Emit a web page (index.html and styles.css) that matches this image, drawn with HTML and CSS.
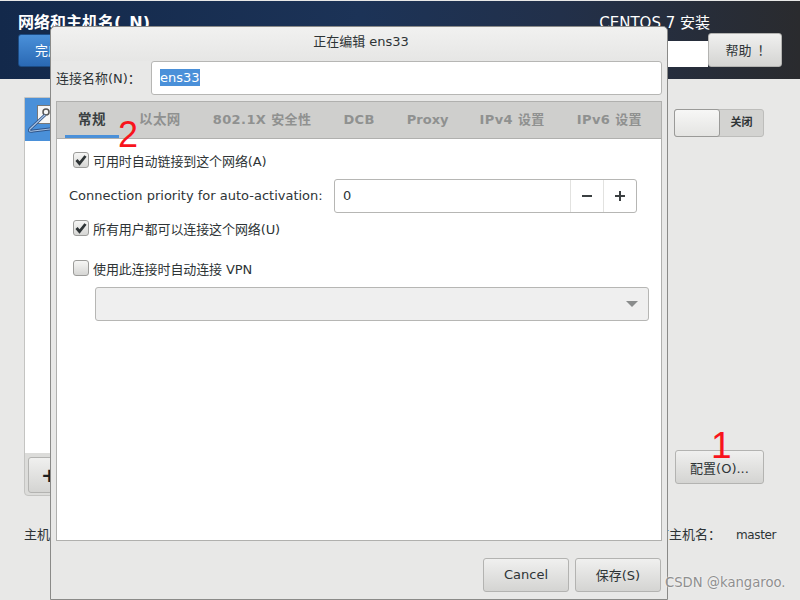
FILE: index.html
```html
<!DOCTYPE html>
<html lang="zh-CN">
<head>
<meta charset="utf-8">
<title>网络和主机名</title>
<link rel="stylesheet" href="styles.css">
</head>
<body>
<div class="screen">
  <header class="top">
    <div class="top-left">
      <div class="top-title">网络和主机名(_N)</div>
      <button class="btn-done">完成(D)</button>
    </div>
    <div class="top-right">
      <div class="top-product">CENTOS 7 安装</div>
      <div class="top-tools">
        <div class="kbd-box"></div>
        <button class="btn btn-help">帮助<span class="bang">！</span></button>
      </div>
    </div>
  </header>
  <main class="spoke">
    <div class="spoke-row">
      <section class="devices">
        <div class="device-list">
          <div class="device-row">
            <svg class="device-icon" width="60" height="40" viewBox="0 0 60 40">
              <rect x="12.500" y="7.500" width="20" height="18" fill="#f6f6f6" stroke="#777"/>
              <circle cx="21" cy="14" r="3" fill="none" stroke="#555" stroke-width="1.500"/>
              <path d="M20 17 L5 31 Q3 34 8 33 L50 28" fill="none" stroke="#2f5488" stroke-width="3"/>
              <path d="M20 17 L5 31 Q3 34 8 33 L50 28" fill="none" stroke="#a9c3e4" stroke-width="1.200"/>
            </svg>
          </div>
        </div>
        <div class="device-tools"><button class="btn btn-add">+</button></div>
      </section>
      <aside class="detail">
        <div class="toggle"><span class="toggle-knob"></span><span class="toggle-text">关闭</span></div>
        <button class="btn btn-config">配置(O)...</button>
      </aside>
    </div>
    <footer class="host-row">
      <span>主机名(H)：</span>
      <span class="host-current"><span>当前主机名：</span><span class="host-value">master</span></span>
    </footer>
  </main>

  <div class="dialog">
    <div class="dialog-title">正在编辑 ens33</div>
    <div class="name-row">
      <label class="name-label">连接名称(N)：</label>
      <div class="name-input"><span class="selected-text">ens33</span></div>
    </div>
    <div class="notebook">
      <nav class="tabs">
        <span class="tab tab-cjk tab-active">常规</span>
        <span class="tab tab-cjk">以太网</span>
        <span class="tab">802.1X 安全性</span>
        <span class="tab">DCB</span>
        <span class="tab tab-proxy">Proxy</span>
        <span class="tab">IPv4 设置</span>
        <span class="tab">IPv6 设置</span>
      </nav>
      <div class="page">
        <div class="check-row"><span class="check checked"><svg width="12" height="12" viewBox="0 0 12 12"><path d="M1.500 6 L4.500 9.500 L10.500 2" fill="none" stroke="#2e3436" stroke-width="2.800"/></svg></span>可用时自动链接到这个网络(A)</div>
        <div class="priority-row">
          <span class="priority-label">Connection priority for auto-activation:</span>
          <div class="spin">
            <span class="spin-value">0</span>
            <span class="spin-btn"><svg width="12" height="12" viewBox="0 0 12 12"><path d="M1 6 H11" stroke="#3a3f41" stroke-width="2"/></svg></span>
            <span class="spin-btn"><svg width="12" height="12" viewBox="0 0 12 12"><path d="M1 6 H11 M6 1 V11" stroke="#3a3f41" stroke-width="2"/></svg></span>
          </div>
        </div>
        <div class="check-row check-second"><span class="check checked"><svg width="12" height="12" viewBox="0 0 12 12"><path d="M1.500 6 L4.500 9.500 L10.500 2" fill="none" stroke="#2e3436" stroke-width="2.800"/></svg></span>所有用户都可以连接这个网络(U)</div>
        <div class="check-row check-third"><span class="check"></span>使用此连接时自动连接 VPN</div>
        <div class="vpn-select"><svg width="12" height="6" viewBox="0 0 12 6"><path d="M0 0 H12 L6 6 Z" fill="#8a8c8c"/></svg></div>
      </div>
    </div>
    <div class="dialog-actions">
      <button class="btn btn-action">Cancel</button>
      <button class="btn btn-action">保存(S)</button>
    </div>
  </div>

  <span class="mark mark-one">1</span>
  <span class="mark mark-two">2</span>
  <span class="watermark">CSDN @kangaroo.</span>
</div>
</body>
</html>
```
FILE: styles.css
```css
* { box-sizing: border-box; }
html, body { margin: 0; padding: 0; }
body {
  width: 800px;
  height: 600px;
  overflow: hidden;
  font-family: "DejaVu Sans", "Noto Sans CJK SC", sans-serif;
  font-size: 13px;
  color: #2e3436;
  background: #e8e8e7;
}
.screen { position: relative; width: 800px; height: 600px; overflow: hidden; }
button { font: inherit; color: inherit; padding: 0; }

.top {
  margin-top: 1px;
  height: 78px;
  padding: 12px 18px 0 18px;
  display: flex;
  justify-content: space-between;
  background: linear-gradient(90deg, #13294b 0%, #1c3357 45%, #22304a 70%, #2a2b2e 100%);
  color: #fff;
}
.top-title { font-size: 16px; font-weight: bold; line-height: 20px; height: 21px; }
.btn-done {
  width: 70px;
  height: 33px;
  padding: 0 0 3px 16px;
  border: 1px solid #1c4c85;
  border-radius: 3px;
  background: linear-gradient(#4a90d9, #2a69b4);
  color: #fff;
  text-align: left;
}
.top-right { display: flex; flex-direction: column; align-items: flex-end; }
.top-product { font-size: 15px; line-height: 20px; height: 20px; margin-right: 72px; }
.top-tools { display: flex; }
.kbd-box { width: 120px; height: 26px; margin-top: 8px; background: #fff; }
.btn {
  border: 1px solid #b3b3b1;
  border-radius: 3px;
  background: linear-gradient(#f0f0ef, #d4d4d2);
  color: #2e3436;
}
.btn-help { width: 74px; height: 34px; padding-bottom: 2px; }
.bang { margin: 0 -6px 0 6px; }

.spoke { padding: 18px 19px 0 24px; }
.spoke-row { display: flex; justify-content: space-between; }
.devices { width: 560px; height: 399px; border: 1px solid #c4c4c2; border-radius: 0 0 4px 4px; background: #dcdcda; }
.device-list { height: 355px; background: #fff; }
.device-row { height: 43px; background: #4a90d9; }
.device-icon { display: block; }
.device-tools { padding: 4px 3px; }
.btn-add { width: 60px; height: 36px; font-size: 20px; font-weight: bold; color: #1d2022; text-align: left; padding-left: 12px; }
.detail { width: 107px; display: flex; flex-direction: column; align-items: flex-start; }
.toggle {
  margin-top: 12px;
  width: 90px;
  height: 28px;
  display: flex;
  background: #d3d3d1;
  border: 1px solid #bdbdbb;
  border-radius: 3px;
}
.toggle-knob { width: 46px; margin: -1px 0 -1px -1px; border: 1px solid #9a9a98; border-radius: 3px; background: linear-gradient(#f7f7f6, #e4e4e2); }
.toggle-text { flex: 1; text-align: center; font-size: 11px; font-weight: bold; line-height: 26px; }
.btn-config { margin: 313px 0 0 1px; width: 89px; height: 34px; }
.host-row { margin-top: 30px; display: flex; justify-content: space-between; line-height: 18px; }
.host-current { display: flex; margin-right: 5px; white-space: nowrap; }
.host-value { margin-left: 15px; font-size: 12px; letter-spacing: -0.400px; }

.dialog {
  position: absolute;
  left: 50px;
  top: 26px;
  width: 618px;
  height: 574px;
  display: flex;
  flex-direction: column;
  padding: 0 5px;
  background: #e8e8e7;
  border: 1px solid #8a8a88;
  border-radius: 5px 5px 0 0;
}
.dialog-title {
  margin: 0 -5px;
  height: 34px;
  padding-left: 4px;
  text-align: center;
  line-height: 29px;
  border-radius: 5px 5px 0 0;
  background: linear-gradient(#f1f1f0, #e6e6e5);
}
.name-row { display: flex; align-items: center; height: 34px; }
.name-label { width: 95px; padding-bottom: 2px; white-space: nowrap; }
.name-input {
  width: 511px;
  height: 34px;
  padding: 0 8px 2px;
  line-height: 30px;
  background: #fff;
  border: 1px solid #b6b6b4;
  border-radius: 3px;
  font-size: 13px;
}
.selected-text { display: inline-block; line-height: 17px; background: #4a90d9; color: #fff; vertical-align: middle; }
.notebook {
  margin-top: 6px;
  width: 606px;
  height: 440px;
  border: 1px solid #b0b0ae;
  display: flex;
  flex-direction: column;
  background: #fff;
}
.tabs { height: 37px; flex: none; background: #cfcfcd; border-bottom: 1px solid #b0b0ae; display: flex; padding-left: 8px; font-weight: bold; color: #8f9190; }
.tab { padding: 0 14px; margin-right: 4px; line-height: 35px; white-space: nowrap; letter-spacing: 0.400px; }
.tab-cjk { font-size: 13.500px; }
.tab-proxy { letter-spacing: 0; margin-right: 3px; }
.tab-active { color: #3a3f41; box-shadow: inset 0 -3px 0 #4a90d9; width: 54px; padding: 0 13px; margin-right: 6px; }
.page { padding: 12px 0 0 12px; }
.check-row { display: flex; align-items: center; height: 18px; margin-left: 4px; letter-spacing: -0.100px; }
.check {
  width: 16px;
  height: 16px;
  flex: none;
  margin-right: 4px;
  display: flex;
  align-items: center;
  justify-content: center;
  border: 1px solid #9c9c9a;
  border-radius: 3px;
  background: linear-gradient(#f6f6f5, #d6d6d4);
}
.priority-row { display: flex; align-items: center; margin-top: 10px; height: 34px; }
.priority-label { width: 265px; padding-bottom: 2px; white-space: nowrap; }
.spin { width: 303px; height: 34px; display: flex; align-items: center; background: #fff; border: 1px solid #b6b6b4; border-radius: 3px; }
.spin-value { flex: 1; padding: 0 0 2px 8px; }
.spin-btn { width: 33px; height: 32px; display: flex; align-items: center; justify-content: center; border-left: 1px solid #e2e2e0; }
.check-second { margin-top: 6px; }
.check-third { margin-top: 22px; }
.vpn-select {
  margin: 10px 0 0 26px;
  width: 554px;
  height: 34px;
  display: flex;
  align-items: center;
  justify-content: flex-end;
  padding-right: 10px;
  background: #efefef;
  border: 1px solid #b6b6b4;
  border-radius: 3px;
}
.dialog-actions { display: flex; justify-content: flex-end; gap: 6px; margin-top: 17px; padding-right: 1px; }
.btn-action { width: 86px; height: 34px; padding-bottom: 2px; }

.mark { position: absolute; color: #f8141c; line-height: 1; font-family: "Liberation Sans", sans-serif; }
.mark-one { left: 711px; top: 427px; font-size: 37px; }
.mark-two { left: 118px; top: 117px; font-size: 36px; }
.watermark { position: absolute; left: 665px; top: 575px; font-size: 13.200px; color: #8f8f8f; text-shadow: 0 0 2px #fff; white-space: nowrap; }
```
